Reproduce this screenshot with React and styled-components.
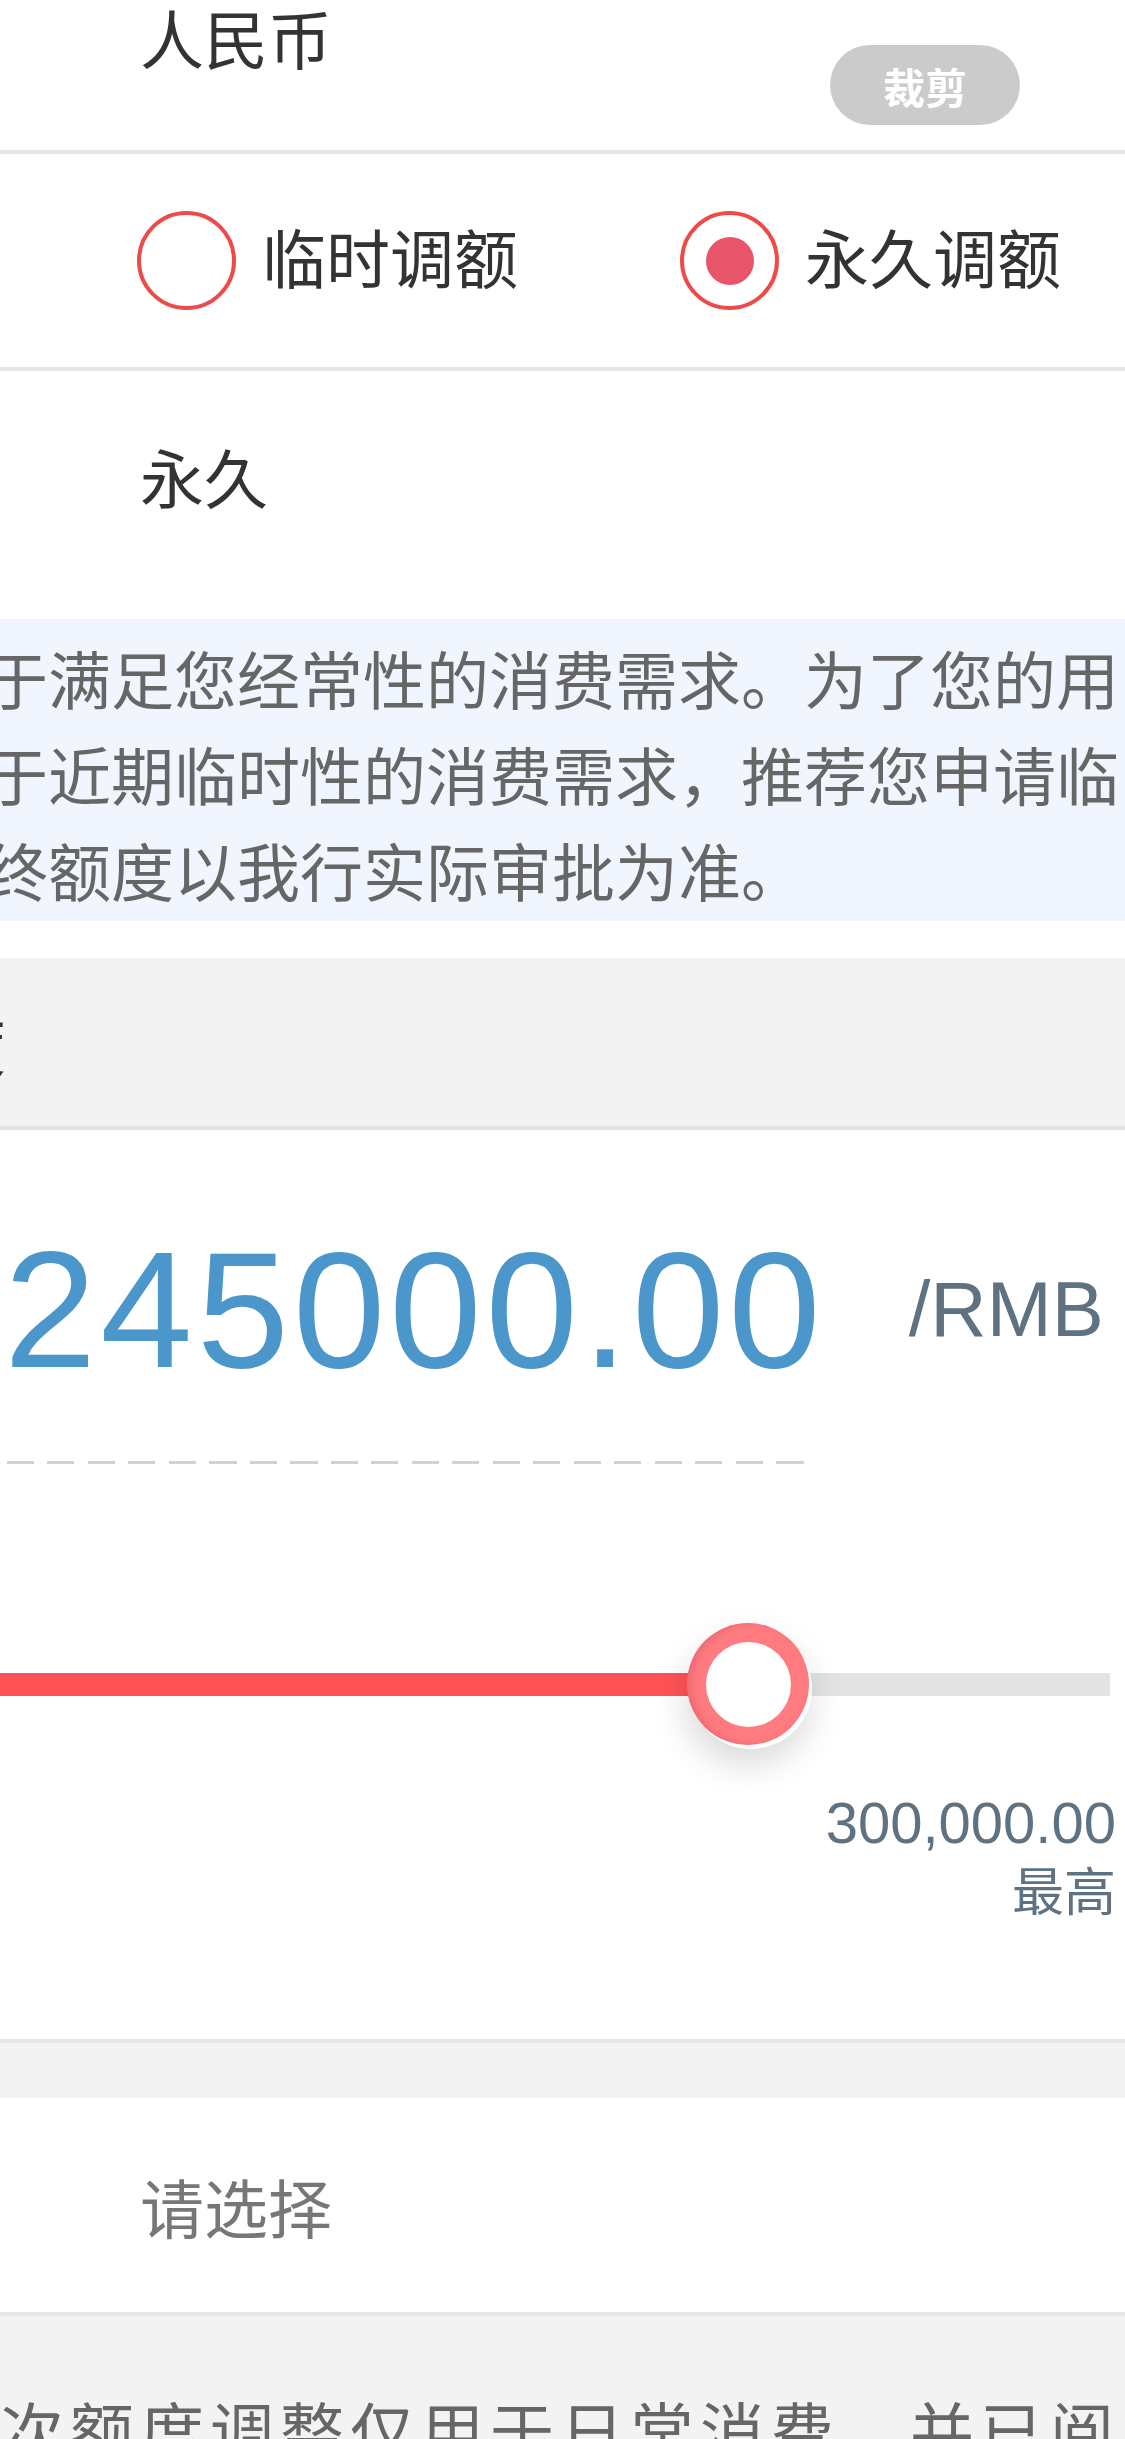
import React from 'react'
import styled, { createGlobalStyle } from 'styled-components'

const GlobalStyle = createGlobalStyle`
  * {
    margin: 0;
    padding: 0;
    box-sizing: border-box;
  }
  body {
    margin: 0;
    background: #fff;
    font-family: "Noto Sans CJK SC", "Noto Sans", sans-serif;
  }
`

const Page = styled.div`
  position: relative;
  width: 1125px;
  height: 2439px;
  overflow: hidden;
  background: #fff;
  color: #333;
`

const Row = styled.div`
  display: flex;
  align-items: ${p => p.align || 'center'};
  height: ${p => p.h}px;
  padding-left: ${p => (p.pl != null ? p.pl : 140)}px;
  padding-top: ${p => p.pt || 0}px;
  background: #fff;
  border-bottom: ${p => (p.divider ? '4px solid #e6e6e6' : 'none')};
`

const Label = styled.span`
  font-size: 64px;
  line-height: 64px;
  color: ${p => p.color || '#333'};
  white-space: nowrap;
`

const RadioText = styled(Label)`
  padding-bottom: 12px;
`

const CropBadge = styled.div`
  position: absolute;
  top: 45px;
  left: 830px;
  width: 190px;
  height: 80px;
  border-radius: 40px;
  background: #cbcbcb;
  color: #fff;
  font-size: 42px;
  font-weight: 700;
  display: flex;
  align-items: center;
  justify-content: center;
`

const RadioGroup = styled.div`
  display: flex;
  align-items: center;
  gap: 162px;
`

const RadioItem = styled.label`
  display: flex;
  align-items: center;
  gap: 26px;
`

const Circle = styled.span`
  width: 99px;
  height: 99px;
  border-radius: 50%;
  border: 4px solid #ef4a4a;
  display: flex;
  align-items: center;
  justify-content: center;
  &::after {
    content: '';
    width: 48px;
    height: 48px;
    border-radius: 50%;
    background: #e8546a;
    display: ${p => (p.checked ? 'block' : 'none')};
  }
`

const Notice = styled.div`
  height: 302px;
  padding-top: 10px;
  background: #f0f5fe;
  overflow: hidden;
`

const NoticeLine = styled.p`
  margin-left: -15px;
  font-size: 63px;
  line-height: 96px;
  color: #666;
  white-space: nowrap;
`

const Spacer = styled.div`
  height: ${p => p.h}px;
  background: ${p => p.bg || '#fff'};
`

const SectionHead = styled.div`
  height: 172px;
  background: #f3f3f3;
  border-bottom: 4px solid #e3e3e3;
  display: flex;
  align-items: center;
`

const HeadLabel = styled.div`
  width: 6px;
  display: flex;
  justify-content: flex-end;
  font-size: 64px;
  line-height: 64px;
  color: #333;
  white-space: nowrap;
`

const AmountPanel = styled.div`
  height: 913px;
  padding-top: 97px;
  background: #fff;
  border-bottom: 4px solid #e6e6e6;
`

const AmountRow = styled.div`
  display: flex;
  align-items: flex-start;
  padding-left: 4px;
`

const Amount = styled.span`
  font-family: "Liberation Sans", Arial, sans-serif;
  font-size: 166px;
  line-height: 1;
  letter-spacing: 4px;
  color: #4b97cc;
`

const Unit = styled.span`
  margin-left: 84px;
  margin-top: 43px;
  font-family: "Liberation Sans", Arial, sans-serif;
  font-size: 78px;
  line-height: 1;
  color: #5e7282;
`

const DashLine = styled.div`
  margin: 68px 0 0 7px;
  width: 797px;
  height: 3px;
  background: repeating-linear-gradient(90deg, #c9d3d8 0 27px, transparent 27px 40.5px);
`

const Slider = styled.div`
  position: relative;
  margin-top: 158px;
  height: 125px;
  width: 1110px;
  display: flex;
  align-items: center;
`

const Track = styled.div`
  width: 100%;
  height: 23px;
  background: linear-gradient(90deg, #ff5256 0 ${p => p.at}px, #e3e3e3 ${p => p.at}px 100%);
`

const Knob = styled.div`
  position: absolute;
  top: 1px;
  left: ${p => p.at - 61}px;
  width: 122px;
  height: 122px;
  border-radius: 50%;
  background: #ff7b80;
  box-shadow: inset 5px 0 6px rgba(190, 60, 70, 0.25), 3px 4px 0 0 #fff, 0 18px 36px rgba(0, 0, 0, 0.16);
  display: flex;
  align-items: center;
  justify-content: center;
  &::after {
    content: '';
    width: 85px;
    height: 85px;
    border-radius: 50%;
    background: #fff;
  }
`

const Limit = styled.div`
  margin-top: 41px;
  padding-right: 9px;
  text-align: right;
  color: #5e7282;
`

const LimitValue = styled.div`
  font-family: "Liberation Sans", Arial, sans-serif;
  font-size: 58px;
  line-height: 1.2;
`

const LimitLabel = styled.div`
  font-size: 52px;
  line-height: 62px;
`

const Footer = styled.div`
  height: 200px;
  padding-top: 80px;
  background: #f3f3f3;
  overflow: hidden;
`

const FooterText = styled.p`
  font-size: 64px;
  line-height: 64px;
  letter-spacing: 6px;
  color: #666;
  white-space: nowrap;
`

const App = () => {
  const knobAt = 748

  return (
    <Page>
      <GlobalStyle />

      <Row h={154} align="flex-start" pt={4} divider>
        <Label>人民币</Label>
      </Row>
      <CropBadge>裁剪</CropBadge>

      <Row h={217} pl={137} divider>
        <RadioGroup>
          <RadioItem>
            <Circle />
            <RadioText>临时调额</RadioText>
          </RadioItem>
          <RadioItem>
            <Circle checked />
            <RadioText>永久调额</RadioText>
          </RadioItem>
        </RadioGroup>
      </Row>

      <Row h={248} align="flex-start" pt={72}>
        <Label>永久</Label>
      </Row>

      <Notice>
        <NoticeLine>于满足您经常性的消费需求。为了您的用</NoticeLine>
        <NoticeLine>于近期临时性的消费需求，推荐您申请临</NoticeLine>
        <NoticeLine>终额度以我行实际审批为准。</NoticeLine>
      </Notice>

      <Spacer h={37} />

      <SectionHead>
        <HeadLabel>调整额度</HeadLabel>
      </SectionHead>

      <AmountPanel>
        <AmountRow>
          <Amount>245000.00</Amount>
          <Unit>/RMB</Unit>
        </AmountRow>
        <DashLine />
        <Slider>
          <Track at={knobAt} />
          <Knob at={knobAt} />
        </Slider>
        <Limit>
          <LimitValue>300,000.00</LimitValue>
          <LimitLabel>最高</LimitLabel>
        </Limit>
      </AmountPanel>

      <Spacer h={55} bg="#f3f3f3" />

      <Row h={218} divider>
        <Label color="#777">请选择</Label>
      </Row>

      <Footer>
        <FooterText>次额度调整仅用于日常消费，并已阅</FooterText>
      </Footer>
    </Page>
  )
}

export default App
